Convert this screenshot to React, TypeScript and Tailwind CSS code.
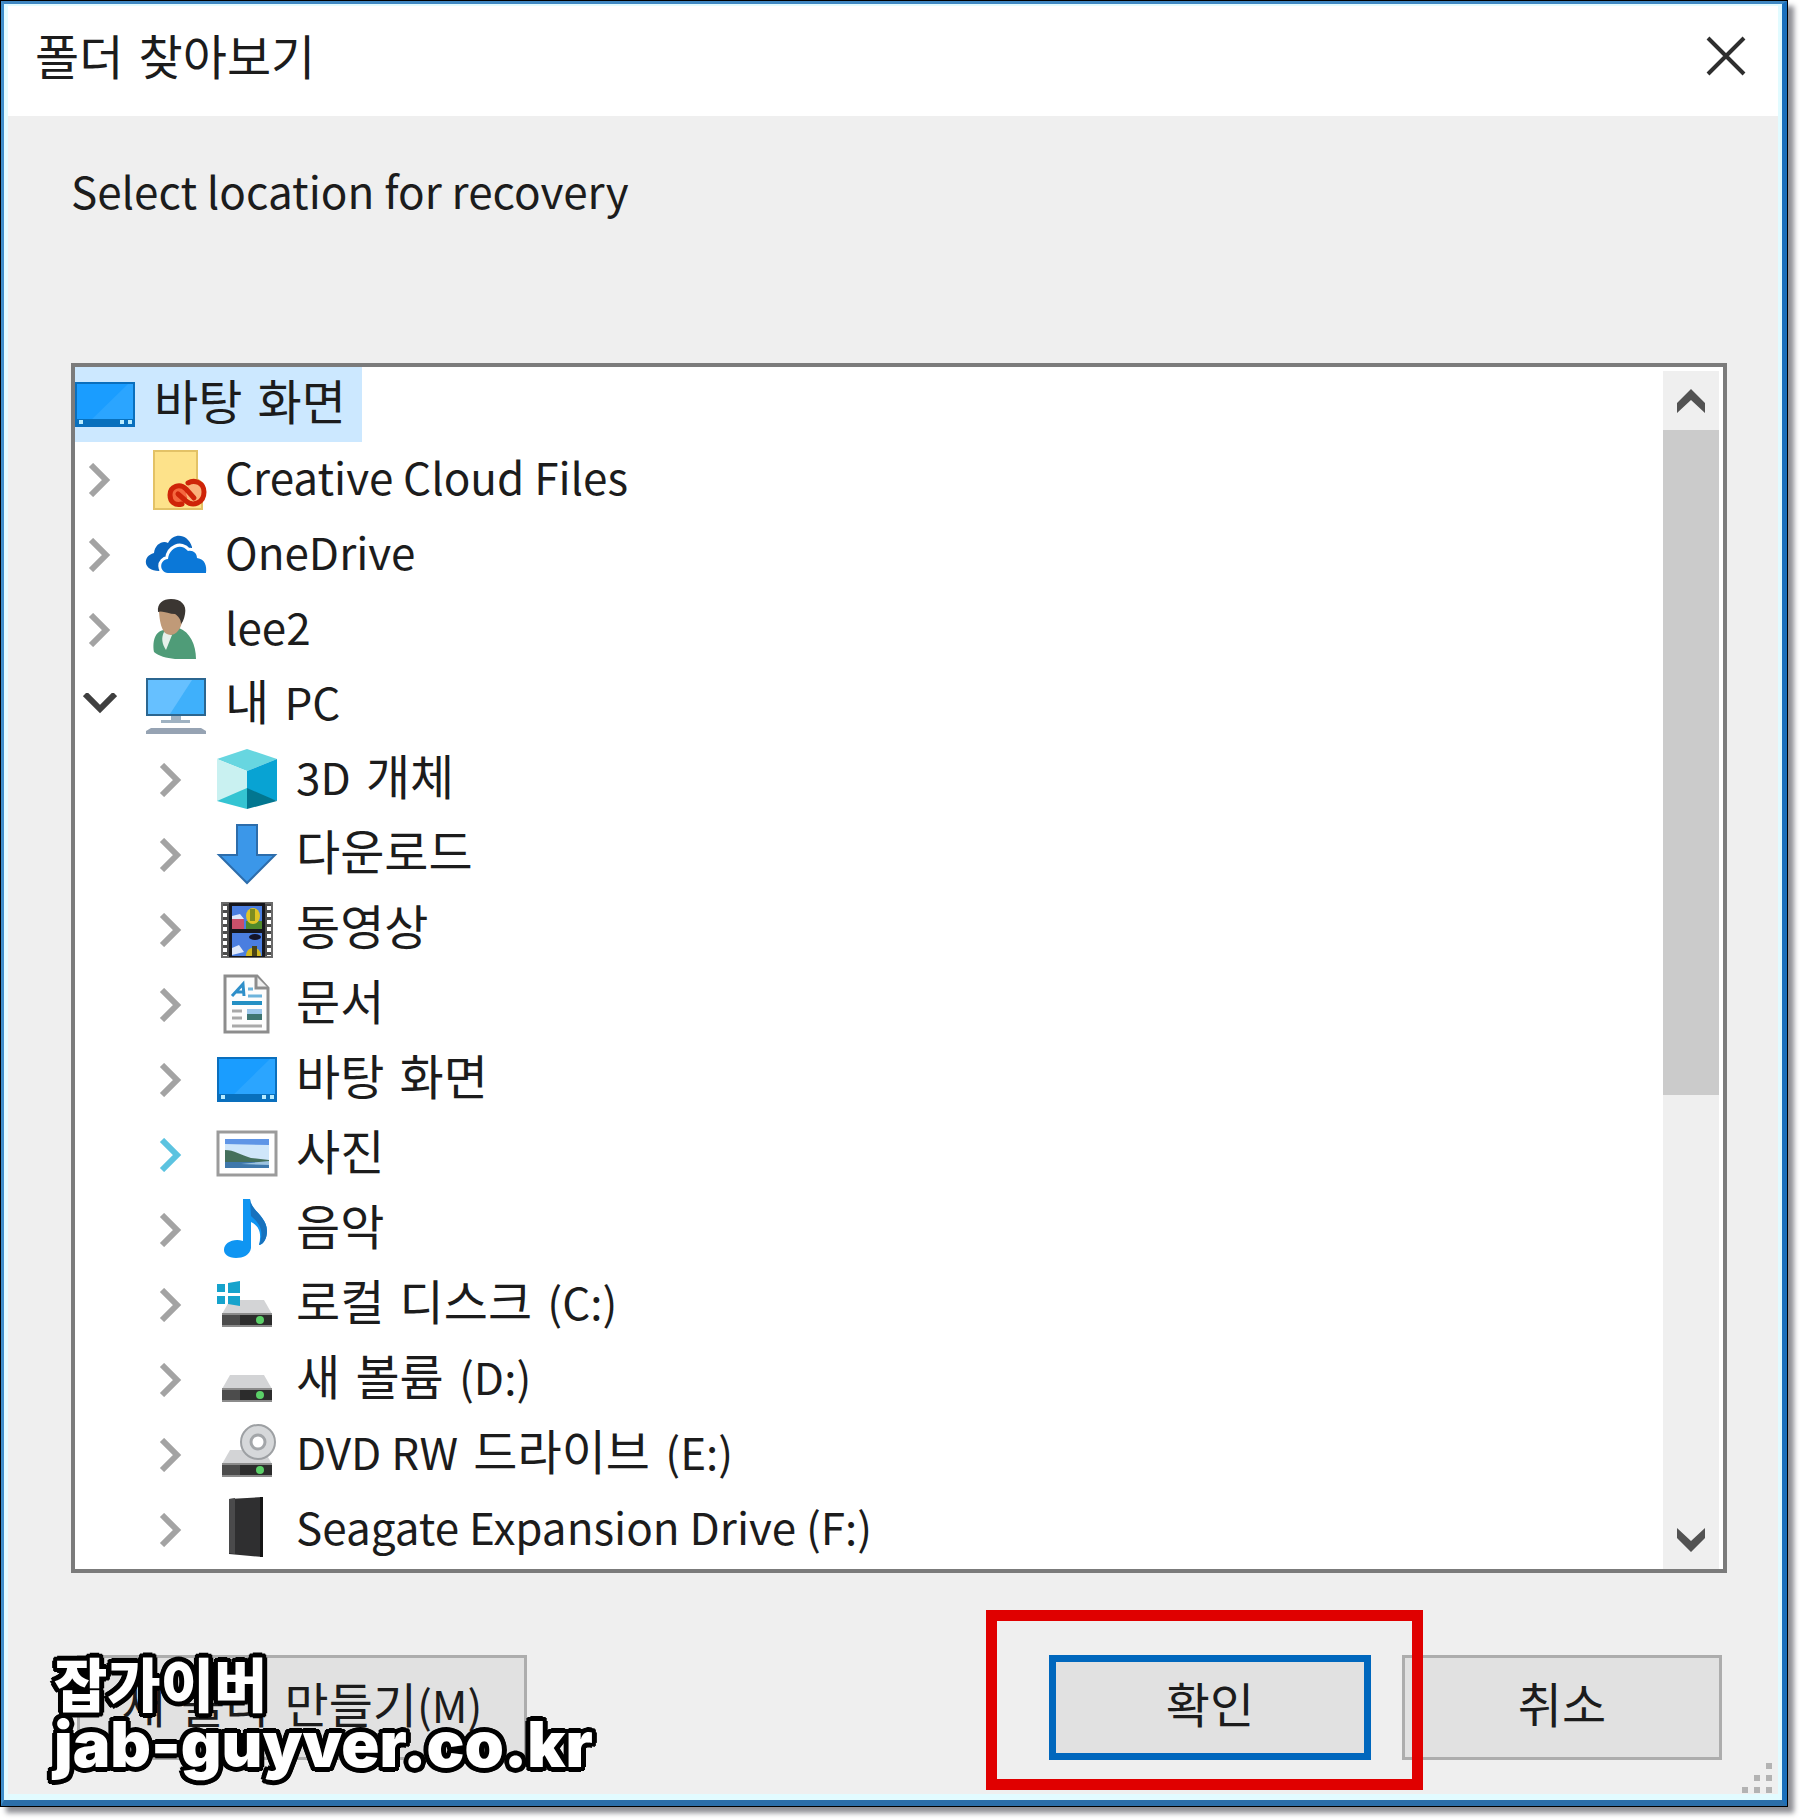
import { ReactNode, useState } from 'react';

interface TreeNode {
  id: string;
  label: string;
  icon: ReactNode;
  level: 0 | 1 | 2;
  state: 'root' | 'closed' | 'open';
  hot?: boolean;
}

const ICON = 'size-[60px] shrink-0 overflow-visible';

function DesktopIcon() {
  return (
    <svg viewBox="0 0 60 60" className={ICON}>
      <rect x="1" y="8" width="58" height="43" fill="#1a9dff" />
      <path d="M10 51L54 8h5v43z" fill="#2ba5ff" />
      <rect x="1" y="44" width="58" height="7" fill="#0870bd" />
      <rect x="1" y="8" width="58" height="43" fill="none" stroke="#0a6fbd" strokeWidth="2" />
      <path d="M4 45h4v4H4zM45 45h4v4h-4zM53 45h4v4h-4z" fill="#b9ecff" />
    </svg>
  );
}

function CreativeCloudIcon() {
  return (
    <svg viewBox="0 0 60 60" className={ICON}>
      <path d="M8 1h43v28l5 4v26H8z" fill="#fde28a" stroke="#e3c266" strokeWidth="2" />
      <ellipse cx="33" cy="45" rx="9" ry="9" fill="#f4683f" />
      <ellipse cx="49" cy="42" rx="9" ry="10" fill="#fbb27a" />
      <g fill="none" stroke="#cf2408" strokeWidth="5" strokeLinecap="round">
        <path d="M36 54c-7 2-12-2-12-9 0-9 10-12 16-6l8 9" />
        <path d="M42 33c7-4 16 0 16 9 0 11-11 15-18 9l-8-7" />
      </g>
    </svg>
  );
}

function OneDriveIcon() {
  return (
    <svg viewBox="0 0 60 60" className={ICON}>
      <path d="M13 46C-3 46-4 31 8 28c1-9 9-13 14-10 6-11 20-9 24 4v14H22z" fill="#0a66bf" />
      <path
        d="M22 48c-9-1-9-13 0-14 1-11 13-17 20-8 5-1 9 2 9 7 8 1 10 8 9 15z"
        fill="#0b78d8"
        stroke="#fff"
        strokeWidth="6"
        strokeLinejoin="round"
        paintOrder="stroke"
      />
    </svg>
  );
}

function UserIcon() {
  return (
    <svg viewBox="0 0 60 60" className={ICON}>
      <path d="M8 52C6 40 10 30 19 30l14-2c11 4 17 17 17 31H29c-9-1-16-3-21-7z" fill="#4f9c78" />
      <path d="M18 32l8 3-6 15c-4-6-5-12-2-18z" fill="#e6f1ea" />
      <path d="M13 12c0-6 24-6 24 2 0 10-4 20-12 21-8 0-11-9-12-23z" fill="#c09a78" />
      <path d="M12 12C11 3 17-1 25-1c10 0 16 6 14 15-1 6-3 9-4 10 0-5-3-8-6-10-6 0-13-4-17-2z" fill="#3b3632" />
    </svg>
  );
}

function ComputerIcon() {
  return (
    <svg viewBox="0 0 60 60" className={ICON}>
      <rect x="1" y="4" width="58" height="36" fill="#3fb0fb" stroke="#2b6690" strokeWidth="2" />
      <path d="M2 39V5h44L24 39z" fill="#66c0ff" />
      <path d="M25 41h10v4h9v3H15v-3h10z" fill="#9fb2c2" />
      <path d="M5 53h50l5 3v3H0v-3z" fill="#96a3b3" />
    </svg>
  );
}

function CubeIcon() {
  return (
    <svg viewBox="0 0 60 60" className={ICON}>
      <path d="M30-1l30 10-30 12L0 9z" fill="#67d6e0" />
      <path d="M0 9l30 12v21L0 51z" fill="#c9f1f1" />
      <path d="M60 9L30 21v21l30 9z" fill="#08a3d3" />
      <path d="M0 51l30-13v21z" fill="#34c4d2" />
      <path d="M60 51L30 38v21z" fill="#027690" />
    </svg>
  );
}

function DownloadIcon() {
  return (
    <svg viewBox="0 0 60 60" className={ICON}>
      <path d="M20 0h20v30h18L30 58 2 30h18z" fill="#3b97e9" stroke="#2d6dab" strokeWidth="2" />
    </svg>
  );
}

function VideoIcon() {
  return (
    <svg viewBox="0 0 60 60" className={ICON}>
      <rect x="5" y="3" width="50" height="54" fill="#4c4c4c" stroke="#6a6a6a" strokeWidth="2" />
      <rect x="12" y="3" width="36" height="54" fill="#16161c" />
      <path d="M8 6v50M52 6v50" stroke="#fff" strokeWidth="4" strokeDasharray="4 3" />
      <rect x="15" y="6" width="30" height="23" fill="#4a7ee0" />
      <rect x="15" y="33" width="30" height="23" fill="#4a7ee0" />
      <path d="M15 19h12v10H15z" fill="#c9506a" />
      <path d="M15 16l8-2 4 5H15zM15 48l7-3 5 7-12 3z" fill="#dfe9fb" />
      <path d="M29 21h16v8H29z" fill="#4f8a2c" />
      <ellipse cx="36" cy="16" rx="7" ry="8" fill="#e0c526" />
      <path d="M33 9h5v12h-5z" fill="#7f8d1f" />
      <ellipse cx="38" cy="37" rx="6" ry="3" fill="#14142a" />
      <path d="M29 56c0-11 15-11 15 0z" fill="#d2b81f" />
      <path d="M35 46h5v10h-5z" fill="#4a4414" />
    </svg>
  );
}

function DocumentIcon() {
  return (
    <svg viewBox="0 0 60 60" className={ICON}>
      <path d="M8 1h32l11 12v44H8z" fill="#fdfdfd" stroke="#8d8d8d" strokeWidth="3" />
      <path d="M39 1v12h12" fill="#f0f0f0" stroke="#8d8d8d" strokeWidth="3" />
      <path d="M15 21l11-12 1 12M18 17h9" fill="none" stroke="#2f8fc9" strokeWidth="3" />
      <path d="M31 14h5M31 21h14" stroke="#6db4dc" strokeWidth="3" />
      <path d="M15 28h30" stroke="#2490c4" strokeWidth="4" />
      <path d="M15 36h10M15 43h10M15 51h30" stroke="#a9a9a9" strokeWidth="3" />
      <path d="M30 34h15v5H30z" fill="#9cc7ec" />
      <path d="M30 39h15v6H30z" fill="#3f7672" />
    </svg>
  );
}

function PictureIcon() {
  return (
    <svg viewBox="0 0 60 60" className={ICON}>
      <rect x="1" y="7" width="58" height="43" fill="#fff" stroke="#9b9b9b" strokeWidth="3" />
      <rect x="8" y="14" width="44" height="29" fill="#cfe6fa" />
      <path d="M8 14h44v6L8 19z" fill="#5f95e6" />
      <path d="M8 25c9 0 16 5 26 8l18 2v3H8z" fill="#45705c" />
      <path d="M8 37h44v6H8z" fill="#3f78ab" />
      <path d="M24 39l28-3v4z" fill="#9cc3e0" />
    </svg>
  );
}

function MusicIcon() {
  return (
    <svg viewBox="0 0 60 60" className={ICON}>
      <path d="M26-1h7c1 12 17 17 17 32 0 7-3 13-8 14 3-12 0-19-8-23v26c-1 7-8 10-15 10-8 0-12-4-12-8 0-7 9-12 19-9z" fill="#0f95f2" />
      <path d="M33-1c1 12 17 17 17 32 0 7-3 13-8 14 6-15 0-22-8-29z" fill="#1872bd" />
    </svg>
  );
}

interface DriveIconProps {
  kind?: 'system' | 'dvd';
}

function DriveIcon({ kind }: DriveIconProps) {
  return (
    <svg viewBox="0 0 60 60" className={ICON}>
      <path d="M13 25h34l8 14H5z" fill="#d3d4d6" />
      <rect x="5" y="38" width="50" height="14" fill="#2c2c2c" />
      <path d="M5 38h18v14H5z" fill="#4c4c4c" />
      <path d="M5 38h50v2H5zM5 50h50v2H5z" fill="#8b8b8b" />
      <circle cx="43" cy="45" r="4" fill="#5bd068" />
      {kind === 'system' && <path d="M0 9h8v8H0zM11 8l12-2v12H11zM0 21h8v8H0zM11 21h12v10l-12-2z" fill="#16a3cc" />}
      {kind === 'dvd' && (
        <>
          <circle cx="41" cy="17" r="17" fill="#d6d8da" stroke="#9da0a3" strokeWidth="2" />
          <circle cx="41" cy="17" r="7" fill="#fff" stroke="#a3a6a9" strokeWidth="3" />
        </>
      )}
    </svg>
  );
}

function ExternalDriveIcon() {
  return (
    <svg viewBox="0 0 60 60" className={ICON}>
      <path d="M12-1l34-2v60l-34-3z" fill="#2f2f30" />
      <path d="M12-1l6-1v56l-6-1z" fill="#4a4a4b" />
      <path d="M43-3h3v60h-3z" fill="#151515" />
    </svg>
  );
}

const NODES: TreeNode[] = [
  { id: 'desktop', label: '바탕 화면', icon: <DesktopIcon />, level: 0, state: 'root' },
  { id: 'cc', label: 'Creative Cloud Files', icon: <CreativeCloudIcon />, level: 1, state: 'closed' },
  { id: 'onedrive', label: 'OneDrive', icon: <OneDriveIcon />, level: 1, state: 'closed' },
  { id: 'user', label: 'lee2', icon: <UserIcon />, level: 1, state: 'closed' },
  { id: 'pc', label: '내 PC', icon: <ComputerIcon />, level: 1, state: 'open' },
  { id: '3d', label: '3D 개체', icon: <CubeIcon />, level: 2, state: 'closed' },
  { id: 'downloads', label: '다운로드', icon: <DownloadIcon />, level: 2, state: 'closed' },
  { id: 'videos', label: '동영상', icon: <VideoIcon />, level: 2, state: 'closed' },
  { id: 'documents', label: '문서', icon: <DocumentIcon />, level: 2, state: 'closed' },
  { id: 'pc-desktop', label: '바탕 화면', icon: <DesktopIcon />, level: 2, state: 'closed' },
  { id: 'pictures', label: '사진', icon: <PictureIcon />, level: 2, state: 'closed', hot: true },
  { id: 'music', label: '음악', icon: <MusicIcon />, level: 2, state: 'closed' },
  { id: 'c', label: '로컬 디스크 (C:)', icon: <DriveIcon kind="system" />, level: 2, state: 'closed' },
  { id: 'd', label: '새 볼륨 (D:)', icon: <DriveIcon />, level: 2, state: 'closed' },
  { id: 'e', label: 'DVD RW 드라이브 (E:)', icon: <DriveIcon kind="dvd" />, level: 2, state: 'closed' },
  { id: 'f', label: 'Seagate Expansion Drive (F:)', icon: <ExternalDriveIcon />, level: 2, state: 'closed' },
];

const LATIN = "font-['Noto_Sans_CJK_KR',sans-serif] text-[44px]";

// Latin runs are set a step smaller than the hangul around them
function Label({ text }: { text: string }) {
  const runs = text.split(/([\x21-\x7e](?:[\x20-\x7e]*[\x21-\x7e])?)/).filter(Boolean);
  return (
    <>
      {runs.map((run, i) => (
        <span key={i} className={/[\x21-\x7e]/.test(run) ? `${LATIN} leading-none` : 'leading-none'}>{run}</span>
      ))}
    </>
  );
}

function ScrollArrow({ dir }: { dir: 'up' | 'down' }) {
  return (
    <button aria-label={dir === 'up' ? '위로' : '아래로'} className="flex h-[59px] items-center justify-center">
      <svg viewBox="0 0 28 24" className={`h-6 w-7 ${dir === 'down' ? 'rotate-180' : ''}`}>
        <path d="M0 14L14 0l14 14v10L14 11 0 24z" fill="#525252" />
      </svg>
    </button>
  );
}

interface RowProps {
  node: TreeNode;
  selected: boolean;
  onSelect: () => void;
}

function TreeRow({ node, selected, onSelect }: RowProps) {
  return (
    <li
      role="treeitem"
      aria-selected={selected}
      onClick={onSelect}
      className={`flex h-[75px] w-fit items-center pr-4 ${node.level === 2 ? 'ml-[71px]' : ''} ${selected ? 'bg-[#cce8ff]' : ''}`}
    >
      {node.state !== 'root' && (
        <button aria-label={node.label} className="mr-[21px] flex h-full w-[50px] items-center justify-center">
          {node.state === 'open' ? (
            <svg viewBox="0 0 34 24" className="h-6 w-[34px]">
              <path d="M2 1l15 15L32 1" fill="none" stroke="#3f3f3f" strokeWidth="6" />
            </svg>
          ) : (
            <svg viewBox="0 0 24 34" className="h-[34px] w-6">
              <path d="M3 2l15 15L3 32" fill="none" stroke={node.hot ? '#5cc3e0' : '#a3a3a3'} strokeWidth="6" />
            </svg>
          )}
        </button>
      )}
      {node.icon}
      <span className="ml-[19px] pb-1 leading-[60px] whitespace-pre">
        <Label text={node.label} />
      </span>
    </li>
  );
}

export default function App() {
  const [selected, setSelected] = useState('desktop');

  return (
    <div className="bg-white pr-3 pb-3 font-['DejaVu_Sans','Noto_Sans_CJK_KR',sans-serif] text-[48px] leading-[60px] text-[#1c1c1c]">
      <div className="border border-black shadow-[6px_6px_5px_#909096]">
        <div className="relative border-t-[3px] border-r-[5px] border-b-[6px] border-l-[3px] border-t-[#3f87c2] border-r-[#1b70bc] border-b-[#2b6ea9] border-l-[#3f8fcc] bg-[#efefef]">
          <header className="flex h-[112px] items-center justify-between bg-white pr-9 pb-2 pl-[31px]">
            <h1 className="pt-1">폴더 찾아보기</h1>
            <button aria-label="닫기">
              <svg viewBox="0 0 40 40" className="size-10">
                <path d="M2 2l36 36M38 2L2 38" stroke="#2e2e2e" strokeWidth="4" />
              </svg>
            </button>
          </header>

          <main className="pt-11 pr-[55px] pb-10 pl-[67px]">
            <p className={LATIN}>Select location for recovery</p>

            {/* Folder tree */}
            <div className="mt-[143px] flex border-4 border-[#7b7b7b] bg-white">
              <ul role="tree" className="min-w-0 flex-1 pb-0.5">
                {NODES.map(node => (
                  <TreeRow
                    key={node.id}
                    node={node}
                    selected={node.id === selected}
                    onSelect={() => setSelected(node.id)}
                  />
                ))}
              </ul>
              <div className="mt-1 mr-1 flex w-14 flex-col bg-[#efefef]">
                <ScrollArrow dir="up" />
                <div className="flex-8 bg-[#cbcbcb]" />
                <div className="flex-5" />
                <ScrollArrow dir="down" />
              </div>
            </div>

            {/* Buttons */}
            <div className="mt-[82px] flex items-center pr-[5px] pl-[6px]">
              <button className="h-[105px] w-[450px] border-[3px] border-[#adadad] bg-[#e1e1e1] pb-1 whitespace-pre">
                <Label text="새 폴더 만들기(M)" />
              </button>
              <div className="relative ml-auto">
                <button className="h-[105px] w-[322px] border-[7px] border-[#0067bd] bg-[#e1e1e1] pb-1">확인</button>
                <div className="pointer-events-none absolute -top-[45px] -right-[52px] -bottom-[30px] -left-[63px] z-10 border-[11px] border-[#e00000]" />
              </div>
              <button className="ml-[31px] h-[105px] w-80 border-[3px] border-[#adadad] bg-[#e1e1e1] pb-1">취소</button>
            </div>
          </main>

          {/* Inner glow along the frame */}
          <div className="pointer-events-none absolute inset-0 border-t-2 border-r-4 border-b-[6px] border-l-4 border-[#e2fbff]" />

          <svg viewBox="0 0 30 30" className="absolute right-[10px] bottom-[7px] size-[30px]">
            <path d="M24 0h6v6h-6zM12 12h6v6h-6zM24 12h6v6h-6zM0 24h6v6H0zM12 24h6v6h-6zM24 24h6v6h-6z" fill="#b3b3b3" />
          </svg>

          {/* Site mark */}
          <div className="pointer-events-none absolute bottom-6 left-[50px] font-black text-white [text-shadow:5px_0_#000,-5px_0_#000,0_5px_#000,0_-5px_#000,3px_4px_#000,-3px_4px_#000,3px_-4px_#000,-3px_-4px_#000,4px_3px_#000,-4px_3px_#000,4px_-3px_#000,-4px_-3px_#000]">
            <p className="font-['Noto_Sans_CJK_KR',sans-serif] text-[58px] leading-[60px]">잡가이버</p>
            <p className="font-[Inter,sans-serif] text-[63px] leading-[64px]">jab-guyver.co.kr</p>
          </div>
        </div>
      </div>
    </div>
  );
}
